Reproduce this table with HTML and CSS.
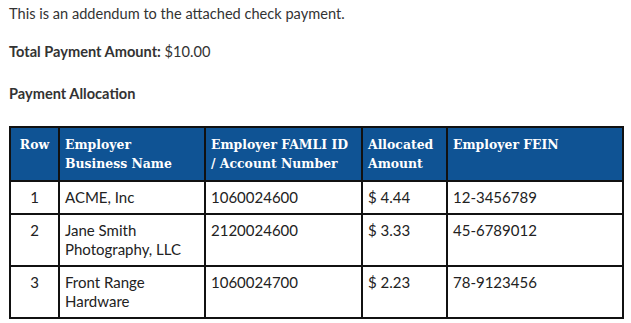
FILE: index.html
```html
<!DOCTYPE html>
<html lang="en">
<head>
    <meta charset="UTF-8">
    <title>Payment Addendum</title>
    <link rel="stylesheet" href="styles.css">
</head>
<body>
    <p class="intro">This is an addendum to the attached check payment.</p>
    <p class="total"><strong>Total Payment Amount:</strong> $10.00</p>
    <p class="section-title"><strong>Payment Allocation</strong></p>
    <table class="alloc-table">
        <colgroup>
            <col class="col-row">
            <col class="col-name">
            <col class="col-id">
            <col class="col-amount">
            <col class="col-fein">
        </colgroup>
        <thead>
            <tr>
                <th class="center">Row</th>
                <th>Employer<br>Business Name</th>
                <th>Employer FAMLI ID<br>/ Account Number</th>
                <th>Allocated<br>Amount</th>
                <th>Employer FEIN</th>
            </tr>
        </thead>
        <tbody>
            <tr>
                <td class="center">1</td>
                <td>ACME, Inc</td>
                <td>1060024600</td>
                <td>$ 4.44</td>
                <td>12-3456789</td>
            </tr>
            <tr>
                <td class="center">2</td>
                <td>Jane Smith<br>Photography, LLC</td>
                <td>2120024600</td>
                <td>$ 3.33</td>
                <td>45-6789012</td>
            </tr>
            <tr>
                <td class="center">3</td>
                <td>Front Range<br>Hardware</td>
                <td>1060024700</td>
                <td>$ 2.23</td>
                <td>78-9123456</td>
            </tr>
        </tbody>
    </table>
</body>
</html>
```

FILE: styles.css
```css
body {
    margin: 0;
    padding: 3px 9px 0 9px;
    font-family: Lato, "Open Sans", sans-serif;
    font-size: 15px;
    line-height: 22px;
    color: #333;
    background: #fff;
}
p {
    margin: 0;
    font-size: 14.6px;
}
.intro {
    margin-bottom: 16px;
}
.total {
    margin-bottom: 20px;
}
.section-title {
    margin-bottom: 21px;
}
strong {
    font-weight: bold;
}
.alloc-table {
    width: 613px;
    border-collapse: collapse;
    table-layout: fixed;
    border: 2px solid #111;
}
.col-row { width: 49px; }
.col-name { width: 146px; }
.col-id { width: 157px; }
.col-amount { width: 85px; }
.col-fein { width: 176px; }
.alloc-table th {
    background-color: #0f5394;
    color: #fff;
    font-family: "DejaVu Serif", serif;
    font-stretch: condensed;
    font-size: 13.8px;
    line-height: 19px;
    font-weight: bold;
    text-align: left;
    vertical-align: top;
    padding: 7px 5px 7px 5px;
    border: 2px solid #111;
}
.alloc-table td {
    color: #222;
    line-height: 19px;
    vertical-align: top;
    padding: 6px 5px 6px 5px;
    border: 2px solid #111;
}
.alloc-table .center {
    text-align: center;
}
```
